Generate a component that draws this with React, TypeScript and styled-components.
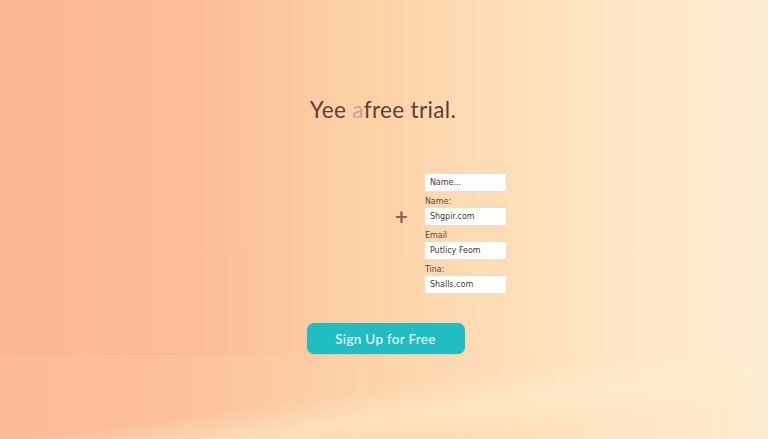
import React from "react";
import styled, { createGlobalStyle } from "styled-components";

const GlobalStyle = createGlobalStyle`
  html, body {
    margin: 0;
    padding: 0;
    width: 100%;
    height: 100%;
    overflow: hidden;
  }
  body {
    font-family: Lato, "Open Sans", sans-serif;
  }
`;

const Page = styled.main`
  position: relative;
  width: 768px;
  height: 439px;
  overflow: hidden;
  display: flex;
  flex-direction: column;
  align-items: center;
  background:
    linear-gradient(90deg, #fcb692 0%, #fcbd96 25%, #fdd3a8 50%, #fee4c0 75%, #feecd0 100%);
`;

const Floor = styled.div`
  position: absolute;
  left: 0;
  right: 0;
  bottom: 0;
  height: 84px;
  pointer-events: none;
  background:
    linear-gradient(172deg, rgba(255, 240, 215, 0) 0%, rgba(255, 240, 215, 0) 45%, rgba(255, 238, 205, 0.55) 62%, rgba(255, 238, 205, 0) 80%),
    linear-gradient(90deg, rgba(252, 190, 155, 0.45) 0%, rgba(253, 215, 175, 0.35) 50%, rgba(254, 235, 205, 0.3) 100%);
`;

const Heading = styled.h1`
  margin: 93px 0 0 -2px;
  font-size: 22.5px;
  font-weight: 400;
  letter-spacing: 0.35px;
  color: #5b4036;
  line-height: 34px;
`;

const Faded = styled.span`
  color: #c9a490;
`;

const FormArea = styled.div`
  margin: 46px 0 0 134px;
  display: flex;
  align-items: flex-start;
  gap: 16px;
`;

const Plus = styled.span`
  margin-top: 32px;
  font-size: 22px;
  font-weight: 700;
  line-height: 24px;
  color: #93605a;
`;

const Fields = styled.div`
  display: flex;
  flex-direction: column;
  width: 83px;
`;

const Label = styled.label`
  font-family: "DejaVu Sans", sans-serif;
  font-size: 8px;
  color: #5a4a42;
  line-height: 10px;
  margin-top: 5px;
  padding-left: 1px;
`;

const Field = styled.div`
  height: 19px;
  box-sizing: border-box;
  background: #ffffff;
  border: 1px solid #f1dccb;
  border-radius: 2px;
  display: flex;
  align-items: center;
  padding-left: 5px;
  font-family: "DejaVu Sans", sans-serif;
  font-size: 8px;
  color: #3f3a38;
`;

const SignUp = styled.button`
  margin: 29px 0 0 3px;
  width: 158px;
  height: 31px;
  border: none;
  border-radius: 7px;
  background: #1ebec4;
  color: #f4fbfb;
  font-family: Lato, sans-serif;
  font-size: 13.5px;
  font-weight: 500;
  letter-spacing: 0.3px;
  box-shadow: 0 1px 2px rgba(150, 110, 80, 0.15);
`;

const rows = [
  { label: "", value: "Name..." },
  { label: "Name:", value: "Shgpir.com" },
  { label: "Email", value: "Putlicy Feom" },
  { label: "Tina:", value: "Shalls.com" },
];

export default function App() {
  return (
    <Page>
      <GlobalStyle />
      <Heading>
        Yee <Faded>a</Faded>free trial.
      </Heading>
      <FormArea>
        <Plus>+</Plus>
        <Fields>
          {rows.map((r) => (
            <React.Fragment key={r.value}>
              {r.label && <Label>{r.label}</Label>}
              <Field>{r.value}</Field>
            </React.Fragment>
          ))}
        </Fields>
      </FormArea>
      <SignUp>Sign Up for Free</SignUp>
      <Floor />
    </Page>
  );
}
